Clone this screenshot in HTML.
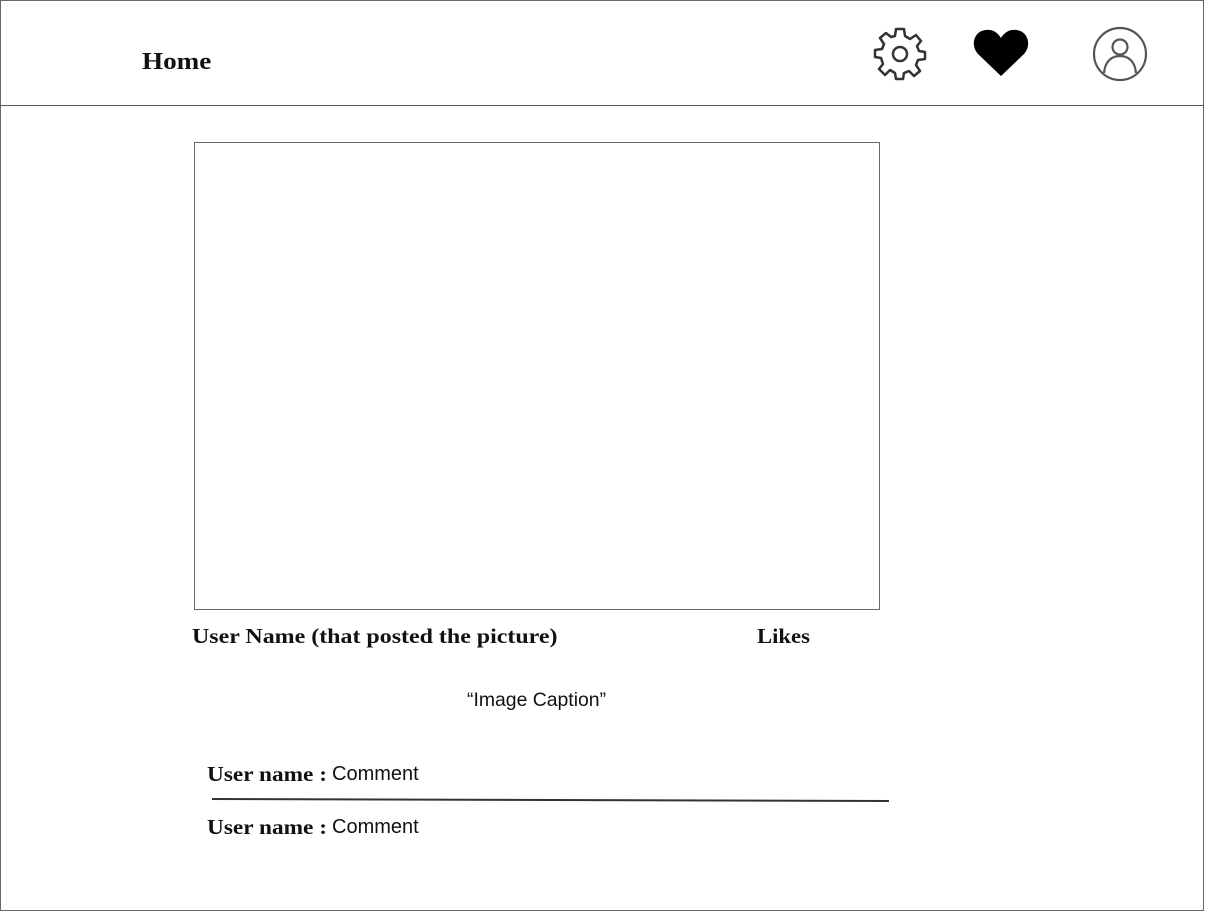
<!DOCTYPE html>
<html><head><style>
body{margin:0;width:1208px;height:912px;background:#fff;position:relative;overflow:hidden;font-family:"Liberation Serif",serif}
.frame{position:absolute;left:0;top:0;width:1202px;height:909px;border:1px solid #666}
.hline{position:absolute;left:0;top:105px;width:1204px;height:0;border-top:1.5px solid #555}
.t{position:absolute;font-weight:bold;color:#111;white-space:nowrap;transform-origin:left top}
.s{position:absolute;font-family:"Liberation Sans",sans-serif;color:#111;white-space:nowrap}
.box{position:absolute;left:194px;top:142px;width:684px;height:466px;border:1px solid #666}
.c{position:absolute;font-family:"Liberation Sans",sans-serif;font-size:20px;color:#111}
</style></head><body>
<div class="frame"></div>
<div class="hline"></div>
<div class="t" style="left:142px;top:49px;font-size:24px;transform:scaleX(1.13)">Home</div>
<svg style="position:absolute;left:870px;top:24px" width="60" height="60" viewBox="-30 -30 60 60">
<path fill="none" stroke="#333" stroke-width="2.5" stroke-linejoin="round" d="M-4,-25 L4,-25 L5,-18 L10,-15 L16,-19 L21,-13 L17,-8 L19,-3 L25,-2 L25,5 L18,6 L16,11 L20,17 L14,22 L9,17 L4,19 L3,25 L-4,25 L-5,19 L-10,16 L-15,21 L-21,15 L-17,10 L-19,4 L-25,3 L-25,-4 L-18,-5 L-16,-10 L-20,-16 L-14,-21 L-9,-17 L-5,-18 Z"/>
<circle r="7" fill="none" stroke="#333" stroke-width="2.5"/></svg>
<svg style="position:absolute;left:972px;top:28px" width="58" height="50" viewBox="0 0 58 50">
<path fill="#000" d="M29,48 L6,26 C-2,17 2,3 14,2 C21,1 26,5 29,10 C32,5 37,1 44,2 C56,3 60,17 52,26 Z"/></svg>
<svg style="position:absolute;left:1091px;top:25px" width="58" height="58" viewBox="0 0 58 58">
<circle cx="29" cy="29" r="26" fill="none" stroke="#555" stroke-width="2.2"/>
<circle cx="29" cy="22" r="7.5" fill="none" stroke="#555" stroke-width="2.2"/>
<path d="M13,48 C14,36 21,31 29,31 C37,31 44,36 45,48" fill="none" stroke="#555" stroke-width="2.2"/></svg>
<div class="box"></div>
<div class="t" style="left:192px;top:624px;font-size:21px;transform:scaleX(1.14)">User Name (that posted the picture)</div>
<div class="t" style="left:757px;top:624px;font-size:21px;transform:scaleX(1.08)">Likes</div>
<div class="s" style="left:467px;top:689px;font-size:19.4px">“Image Caption”</div>
<div class="t" style="left:207px;top:762px;font-size:21px;transform:scaleX(1.11)">User name :</div>
<div class="c" style="left:332px;top:763px">Comment</div>
<div style="position:absolute;left:212px;top:799px;width:677px;border-top:2px solid #333;transform:rotate(0.17deg)"></div>
<div class="t" style="left:207px;top:815px;font-size:21px;transform:scaleX(1.11)">User name :</div>
<div class="c" style="left:332px;top:816px">Comment</div>
</body></html>
